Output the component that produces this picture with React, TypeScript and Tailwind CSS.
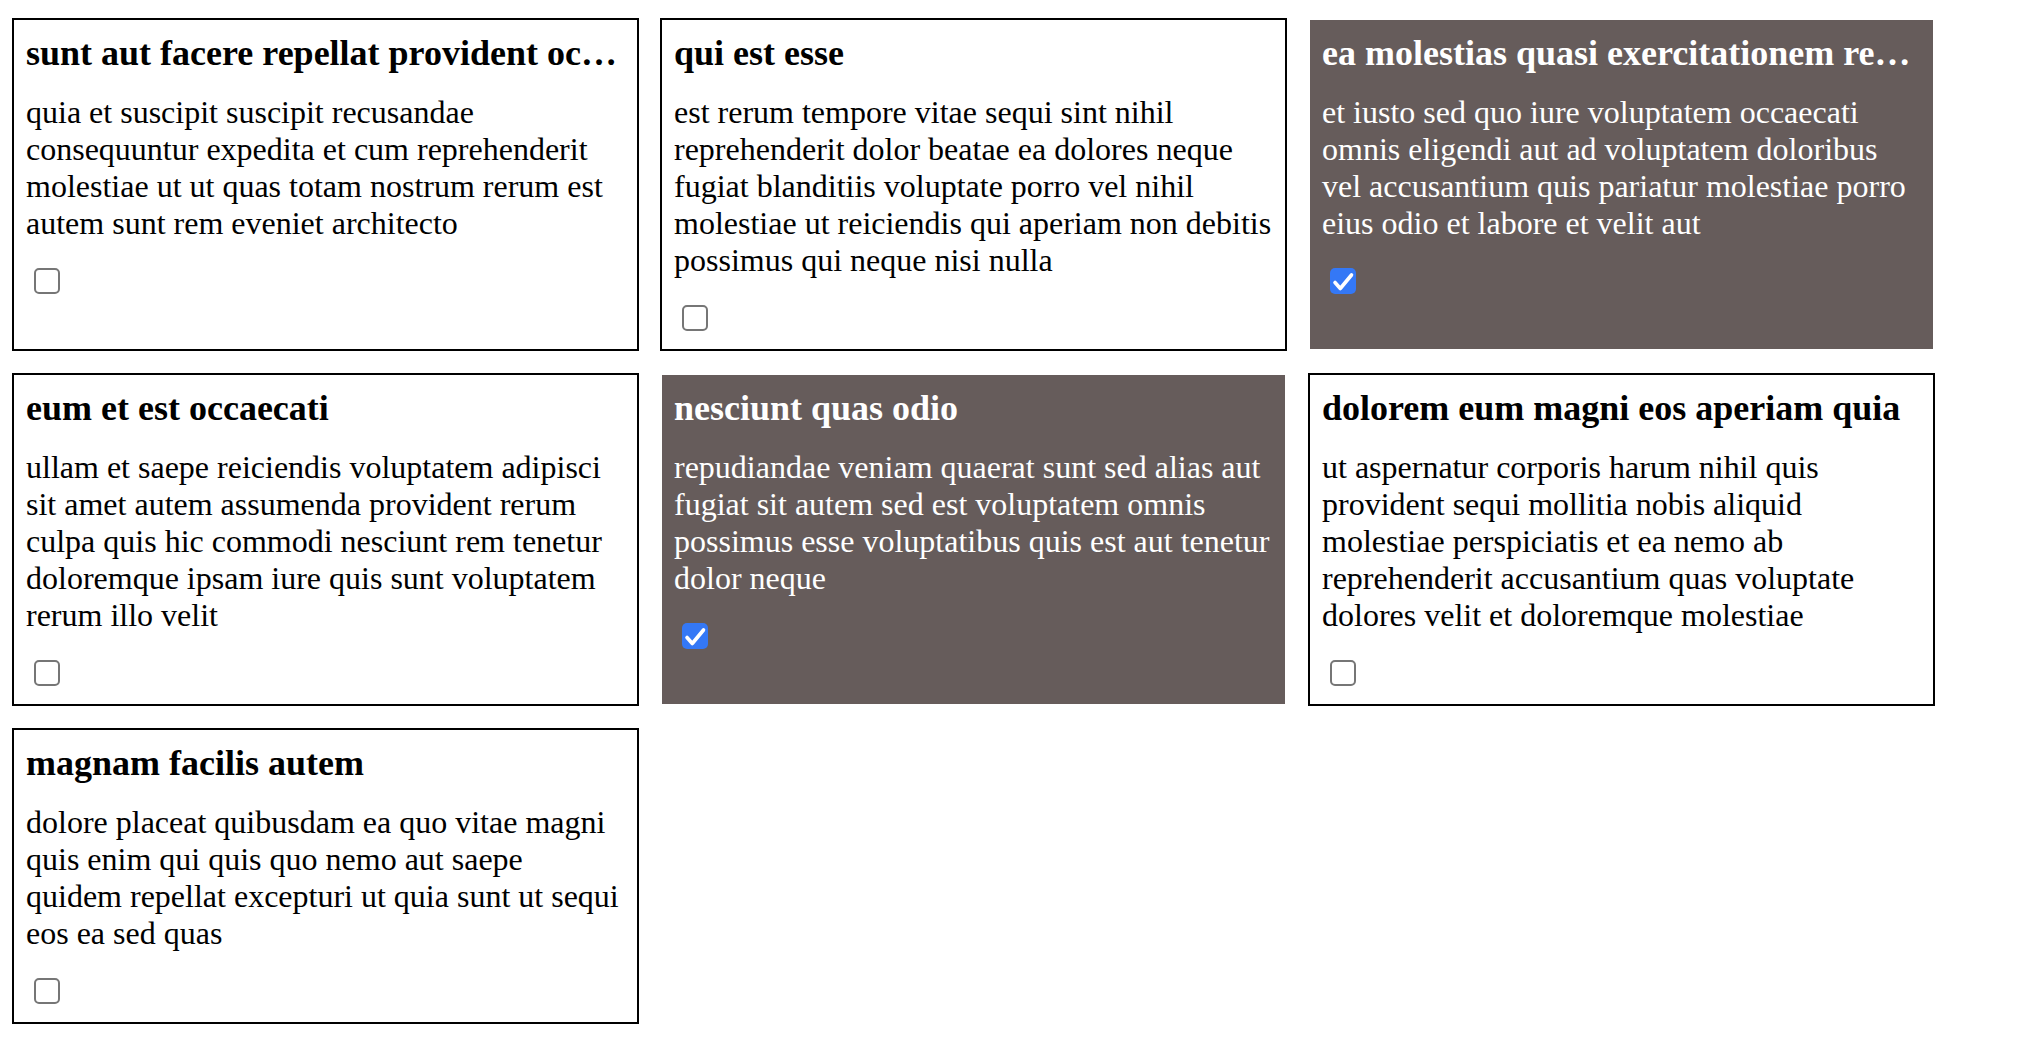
import React from "react";

type Post = { title: string; body: string; checked: boolean };

const posts: Post[] = [
  {
    title: "sunt aut facere repellat provident occaecati excepturi optio reprehenderit",
    body: "quia et suscipit suscipit recusandae consequuntur expedita et cum reprehenderit molestiae ut ut quas totam nostrum rerum est autem sunt rem eveniet architecto",
    checked: false,
  },
  {
    title: "qui est esse",
    body: "est rerum tempore vitae sequi sint nihil reprehenderit dolor beatae ea dolores neque fugiat blanditiis voluptate porro vel nihil molestiae ut reiciendis qui aperiam non debitis possimus qui neque nisi nulla",
    checked: false,
  },
  {
    title: "ea molestias quasi exercitationem repellat qui ipsa sit aut",
    body: "et iusto sed quo iure voluptatem occaecati omnis eligendi aut ad voluptatem doloribus vel accusantium quis pariatur molestiae porro eius odio et labore et velit aut",
    checked: true,
  },
  {
    title: "eum et est occaecati",
    body: "ullam et saepe reiciendis voluptatem adipisci sit amet autem assumenda provident rerum culpa quis hic commodi nesciunt rem tenetur doloremque ipsam iure quis sunt voluptatem rerum illo velit",
    checked: false,
  },
  {
    title: "nesciunt quas odio",
    body: "repudiandae veniam quaerat sunt sed alias aut fugiat sit autem sed est voluptatem omnis possimus esse voluptatibus quis est aut tenetur dolor neque",
    checked: true,
  },
  {
    title: "dolorem eum magni eos aperiam quia",
    body: "ut aspernatur corporis harum nihil quis provident sequi mollitia nobis aliquid molestiae perspiciatis et ea nemo ab reprehenderit accusantium quas voluptate dolores velit et doloremque molestiae",
    checked: false,
  },
  {
    title: "magnam facilis autem",
    body: "dolore placeat quibusdam ea quo vitae magni quis enim qui quis quo nemo aut saepe quidem repellat excepturi ut quia sunt ut sequi eos ea sed quas",
    checked: false,
  },
];

function Check({ checked }: { checked: boolean }) {
  if (checked) {
    return (
      <div className="mt-[26px] ml-[8px] mb-[6px] w-[26px] h-[26px] rounded-[5px] bg-[#3478f6] flex items-center justify-center">
        <svg width="26" height="26" viewBox="0 0 26 26">
          <path
            d="M5 14.5 L10.3 20.5 L21.5 7"
            fill="none"
            stroke="#ffffff"
            strokeWidth="3.6"
            strokeLinecap="round"
            strokeLinejoin="round"
          />
        </svg>
      </div>
    );
  }
  return (
    <div className="mt-[26px] ml-[8px] mb-[6px] w-[26px] h-[26px] rounded-[5px] border-2 border-[#767676] bg-white" />
  );
}

function Card({ post }: { post: Post }) {
  const dark = post.checked;
  return (
    <div
      className={
        dark
          ? "flex flex-col border-2 border-white bg-[#665c5b] bg-clip-padding text-white p-[12px] min-w-0"
          : "flex flex-col border-2 border-black bg-white text-black p-[12px] min-w-0"
      }
    >
      <h3 className="m-0 text-[36px] font-bold leading-[normal] truncate">{post.title}</h3>
      <p className="mt-[20px] m-0 text-[32px] leading-[normal]">{post.body}</p>
      <Check checked={post.checked} />
    </div>
  );
}

export default function App() {
  return (
    <div
      className="min-h-screen bg-white pt-[18px] pl-[12px]"
      style={{ fontFamily: '"Liberation Serif", "Times New Roman", serif' }}
    >
      <div className="grid grid-cols-[repeat(3,627px)] gap-x-[21px] gap-y-[22px] items-stretch">
        {posts.map((p, i) => (
          <Card key={i} post={p} />
        ))}
      </div>
    </div>
  );
}
